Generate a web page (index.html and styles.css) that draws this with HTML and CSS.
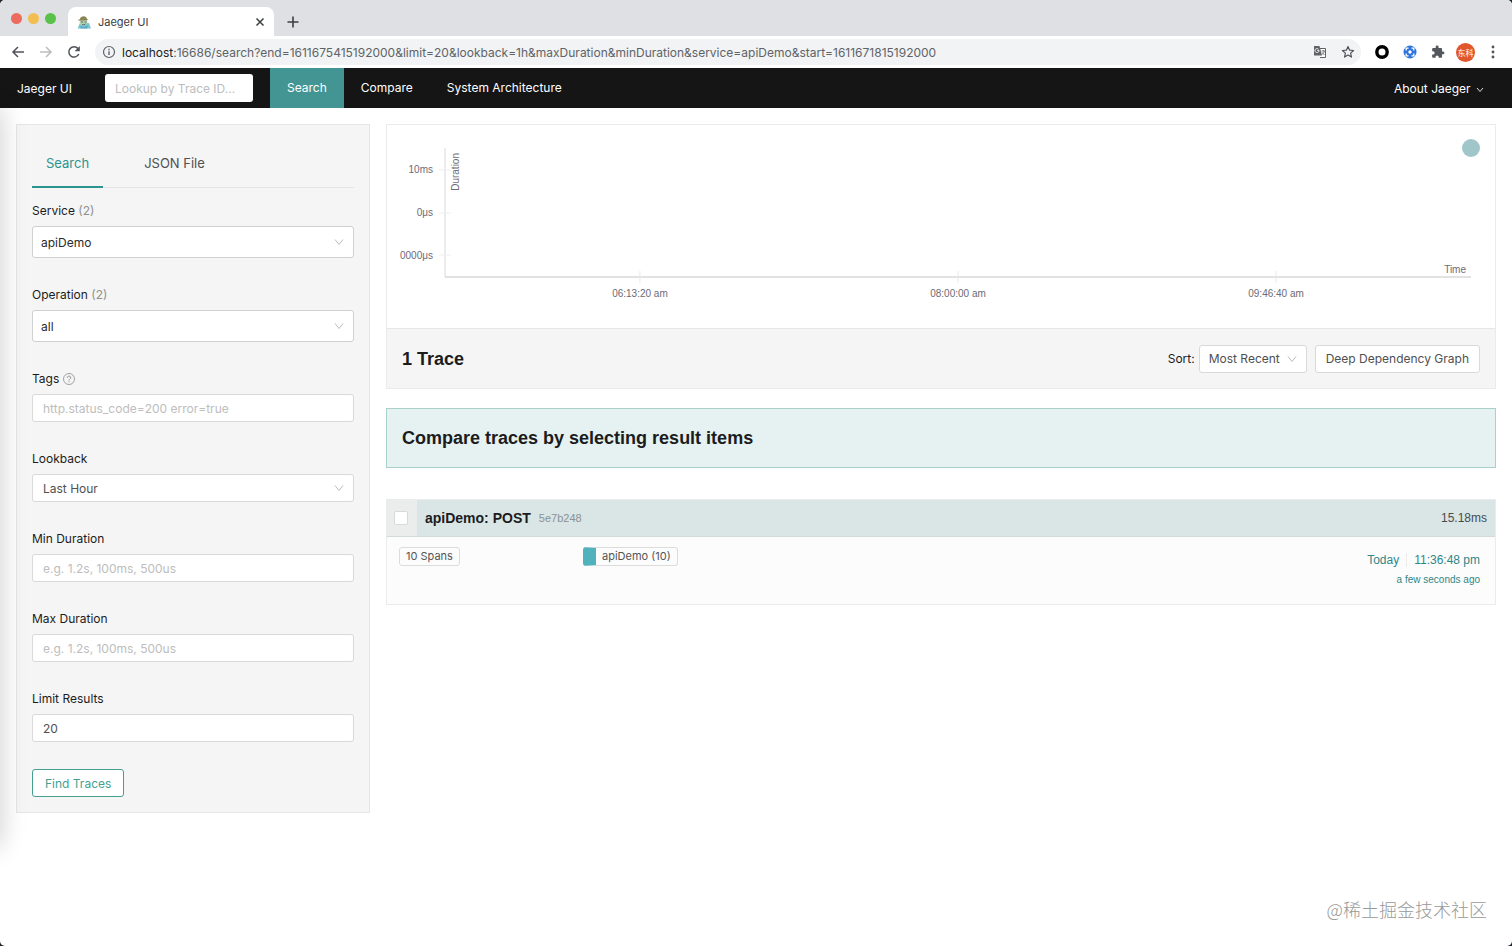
FILE: index.html
```
<!DOCTYPE html>
<html lang="en">
<head>
    <meta charset="UTF-8">
    <meta name="viewport" content="width=device-width, initial-scale=1.0">
    <title>Jaeger UI</title>
    <link rel="stylesheet" href="styles.css">
</head>
<body>
    <div class="window">
        <!-- Browser chrome -->
        <div class="tab-strip">
            <div class="lights">
                <span class="light red"></span>
                <span class="light yellow"></span>
                <span class="light green"></span>
            </div>
            <div class="browser-tab">
                <svg class="favicon" width="14" height="14" viewBox="0 0 14 14">
                    <path d="M3 8h9l2 5.500H0.500z" fill="#7cc4d4"/>
                    <circle cx="6.500" cy="7" r="3.800" fill="#b8cfae"/>
                    <path d="M0.500 5.500L3 4C3.500 0.500 9.500 0 10 4l1.500 1-4 0.600z" fill="#8a8455"/>
                    <path d="M4 7h2M7.500 7h2M5 9.500q2 1 3.500-0.500" stroke="#4f7267" fill="none"/>
                    <path d="M3.500 10.500l3 1.500 4-2v3.500h-7z" fill="#5aaec4"/>
                </svg>
                <span class="tab-title">Jaeger UI</span>
                <button type="button" class="icon-btn" aria-label="Close tab">
                    <svg width="10" height="10" viewBox="0 0 10 10"><path d="M1.500 1.500l7 7M8.500 1.500l-7 7" stroke="#3c4043" stroke-width="1.500"/></svg>
                </button>
            </div>
            <button type="button" class="icon-btn new-tab" aria-label="New tab">
                <svg width="12" height="12" viewBox="0 0 12 12"><path d="M6 0.500v11M0.500 6h11" stroke="#3c4043" stroke-width="1.600"/></svg>
            </button>
        </div>
        <div class="toolbar">
            <button type="button" class="icon-btn" aria-label="Back">
                <svg width="14" height="14" viewBox="0 0 14 14"><path d="M13 7H2M7 2L2 7l5 5" fill="none" stroke="#50545a" stroke-width="1.500"/></svg>
            </button>
            <button type="button" class="icon-btn" aria-label="Forward">
                <svg width="14" height="14" viewBox="0 0 14 14"><path d="M1 7h11M7 2l5 5-5 5" fill="none" stroke="#bbbdc0" stroke-width="1.500"/></svg>
            </button>
            <button type="button" class="icon-btn" aria-label="Reload">
                <svg width="14" height="14" viewBox="0 0 14 14"><path d="M11.800 9A5.200 5.200 0 1 1 11 3.500" fill="none" stroke="#50545a" stroke-width="1.500"/><path d="M12.800 1v5.200H7.600z" fill="#50545a"/></svg>
            </button>
            <div class="address">
                <svg width="14" height="14" viewBox="0 0 14 14"><circle cx="7" cy="7" r="5.500" fill="none" stroke="#5f6368" stroke-width="1.200"/><path d="M7 6.300V10M7 3.800v1.400" stroke="#5f6368" stroke-width="1.400"/></svg>
                <div class="url"><span class="host">localhost</span>:16686/search?end=1611675415192000&amp;limit=20&amp;lookback=1h&amp;maxDuration&amp;minDuration&amp;service=apiDemo&amp;start=1611671815192000</div>
                <button type="button" class="icon-btn" aria-label="Translate">
                    <svg width="14" height="14" viewBox="0 0 14 14">
                        <path d="M5.500 3.500h7v9h-5.500" fill="#fff" stroke="#5f6368"/>
                        <path d="M1 1h5.500l2.500 9.500H1z" fill="#5f6368"/>
                        <path d="M6 5.300H4.200M6 5.300A2 2 0 1 1 5.300 4" fill="none" stroke="#fff" stroke-width="0.900"/>
                        <path d="M8.500 6h3.500M10.300 5v1M11.400 6.200q-0.500 2-2.400 3.300M9.200 7.500l2.300 2.500" fill="none" stroke="#5f6368" stroke-width="0.800"/>
                    </svg>
                </button>
                <button type="button" class="icon-btn" aria-label="Bookmark">
                    <svg width="14" height="14" viewBox="0 0 14 14"><path d="M7 1.500l1.600 3.700 4 0.300-3 2.600 0.900 4L7 10l-3.500 2.100 0.900-4-3-2.600 4-0.300z" fill="none" stroke="#50545a" stroke-width="1.200" stroke-linejoin="round"/></svg>
                </button>
            </div>
            <div class="extensions">
                <button type="button" class="icon-btn" aria-label="Recorder">
                    <svg width="14" height="14" viewBox="0 0 14 14"><circle cx="7" cy="7" r="5.200" fill="#fff" stroke="#000" stroke-width="3.400"/></svg>
                </button>
                <button type="button" class="icon-btn" aria-label="Proxy">
                    <svg width="14" height="14" viewBox="0 0 14 14">
                        <circle cx="7" cy="7" r="6.500" fill="#2f74dc"/>
                        <path d="M3.200 5.500V3.200h2.300M8.500 3.200h2.300v2.300M10.800 8.500v2.300H8.500M5.500 10.800H3.200V8.500" fill="none" stroke="#fff" stroke-width="1.300"/>
                        <circle cx="7" cy="7" r="1.700" fill="#fff"/>
                    </svg>
                </button>
                <button type="button" class="icon-btn" aria-label="Extensions">
                    <svg width="14" height="14" viewBox="0 0 24 24"><path d="M20.500 11H19V7c0-1.100-.9-2-2-2h-4V3.500a2.500 2.500 0 0 0-5 0V5H4c-1.100 0-2 .9-2 2v3.800h1.500a2.700 2.700 0 0 1 0 5.400H2V20c0 1.100.9 2 2 2h3.800v-1.500a2.700 2.700 0 0 1 5.400 0V22H17c1.100 0 2-.9 2-2v-4h1.500a2.500 2.500 0 0 0 0-5z" fill="#54585d"/></svg>
                </button>
                <button type="button" class="avatar">东科</button>
                <button type="button" class="icon-btn" aria-label="Menu">
                    <svg width="14" height="14" viewBox="0 0 14 14" fill="#50545a"><circle cx="7" cy="2" r="1.400"/><circle cx="7" cy="7" r="1.400"/><circle cx="7" cy="12" r="1.400"/></svg>
                </button>
            </div>
        </div>

        <!-- Jaeger navigation -->
        <nav class="nav">
            <a class="brand" href="#">Jaeger UI</a>
            <input class="trace-lookup" type="text" placeholder="Lookup by Trace ID..." aria-label="Lookup by Trace ID">
            <a class="nav-link active" href="#">Search</a>
            <a class="nav-link" href="#">Compare</a>
            <a class="nav-link" href="#">System Architecture</a>
            <a class="about" href="#">About Jaeger
                <svg width="8" height="6" viewBox="0 0 8 6"><path d="M1 1l3 3.500L7 1" fill="none" stroke="#ddd"/></svg>
            </a>
        </nav>

        <div class="content">
            <div class="sidebar">
                <div class="tabs">
                    <button type="button" class="tab active">Search</button>
                    <button type="button" class="tab">JSON File</button>
                </div>
                <form class="search-form">
                    <div class="form-group">
                        <label for="service">Service <span class="count">(2)</span></label>
                        <select id="service" class="control large">
                            <option>apiDemo</option>
                        </select>
                    </div>
                    <div class="form-group">
                        <label for="operation">Operation <span class="count">(2)</span></label>
                        <select id="operation" class="control large">
                            <option>all</option>
                        </select>
                    </div>
                    <div class="form-group">
                        <label for="tags">Tags
                            <svg class="help" width="12" height="12" viewBox="0 0 12 12"><circle cx="6" cy="6" r="5.500" fill="none" stroke="#999" stroke-width="0.900"/><path d="M4.300 4.800a1.700 1.600 0 1 1 2.500 1.300Q6 6.500 6 7.400M6 8.300v1" fill="none" stroke="#888" stroke-width="0.900"/></svg>
                        </label>
                        <input id="tags" class="control" type="text" placeholder="http.status_code=200 error=true">
                    </div>
                    <div class="form-group">
                        <label for="lookback">Lookback</label>
                        <select id="lookback" class="control">
                            <option>Last Hour</option>
                        </select>
                    </div>
                    <div class="form-group">
                        <label for="minDuration">Min Duration</label>
                        <input id="minDuration" class="control" type="text" placeholder="e.g. 1.2s, 100ms, 500us">
                    </div>
                    <div class="form-group">
                        <label for="maxDuration">Max Duration</label>
                        <input id="maxDuration" class="control" type="text" placeholder="e.g. 1.2s, 100ms, 500us">
                    </div>
                    <div class="form-group">
                        <label for="limit">Limit Results</label>
                        <input id="limit" class="control" type="text" value="20">
                    </div>
                    <button type="button" class="btn find">Find Traces</button>
                </form>
            </div>

            <div class="results">
                <div class="overview">
                    <div class="chart">
                        <svg class="plot" width="100%" height="129">
                            <path d="M0 0v129" stroke="#ececec" stroke-width="2"/>
                            <line x1="0" y1="129" x2="100%" y2="129" stroke="#e2e2e2" stroke-width="2"/>
                            <path d="M-6 22h12M-6 65h12M-6 107h12" stroke="#eee"/>
                            <g stroke="#e9e9e9">
                                <line x1="19%" y1="123" x2="19%" y2="135"/>
                                <line x1="50%" y1="123" x2="50%" y2="135"/>
                                <line x1="81%" y1="123" x2="81%" y2="135"/>
                            </g>
                            <g text-anchor="end">
                                <text x="-12" y="25">10ms</text>
                                <text x="-12" y="68">0μs</text>
                                <text x="-12" y="111">0000μs</text>
                                <text x="-5" y="14" transform="rotate(-90)">Duration</text>
                            </g>
                            <g text-anchor="middle">
                                <text x="19%" y="149">06:13:20 am</text>
                                <text x="50%" y="149">08:00:00 am</text>
                                <text x="81%" y="149">09:46:40 am</text>
                            </g>
                            <svg x="100%" overflow="visible">
                                <text x="-5" y="125" text-anchor="end">Time</text>
                            </svg>
                            <circle cx="100%" cy="0" r="9" fill="#a0c6ca"/>
                        </svg>
                    </div>
                    <div class="summary">
                        <h2>1 Trace</h2>
                        <label class="sort-label" for="sort">Sort:</label>
                        <select id="sort" class="control sort">
                            <option>Most Recent</option>
                        </select>
                        <button type="button" class="btn graph">Deep Dependency Graph</button>
                    </div>
                </div>

                <div class="compare">
                    <h2>Compare traces by selecting result items</h2>
                </div>

                <div class="trace">
                    <div class="trace-header">
                        <div class="trace-check">
                            <input type="checkbox" aria-label="Select apiDemo: POST">
                        </div>
                        <h3>apiDemo: POST</h3>
                        <span class="trace-id">5e7b248</span>
                        <span class="trace-duration">15.18ms</span>
                    </div>
                    <div class="trace-body">
                        <div class="spans"><span class="tag">10 Spans</span></div>
                        <div class="services"><span class="tag service">apiDemo (10)</span></div>
                        <div class="when">
                            <div class="when-date"><span>Today</span><span class="clock">11:36:48 pm</span></div>
                            <small>a few seconds ago</small>
                        </div>
                    </div>
                </div>
            </div>
        </div>
        <div class="watermark">@稀土掘金技术社区</div>
    </div>
</body>
</html>
```

FILE: styles.css
```
* {
    box-sizing: border-box;
}

body {
    margin: 0;
    background-color: #1d2528;
    font-family: Inter, "Noto Sans CJK SC", sans-serif;
    font-size: 12px;
    color: #1c1c1c;
}

button,
input,
select {
    font-family: inherit;
    font-size: 12px;
}

a {
    color: inherit;
    text-decoration: none;
}

h2,
h3 {
    margin: 0;
    font-family: "Liberation Sans", Arial, sans-serif;
    font-weight: bold;
    color: #1c1c1c;
}

h2 {
    font-size: 18px;
    line-height: 20px;
}

h3 {
    font-size: 14px;
}

.window {
    position: relative;
    min-height: 100vh;
    background-color: #fff;
    border-radius: 5px;
    overflow: hidden;
}

/* Soft shadow cast along the left edge */
.window::before {
    content: "";
    position: absolute;
    top: 108px;
    bottom: 100px;
    left: -20px;
    width: 20px;
    box-shadow: 0 0 26px rgba(0, 0, 0, 0.22);
    pointer-events: none;
    z-index: 2;
}

/* Browser */
.tab-strip {
    display: flex;
    height: 36px;
    background-color: #dee0e4;
}

.lights {
    display: flex;
    gap: 6px;
    padding: 13px 12px 0 11px;
}

.light {
    width: 11px;
    height: 11px;
    border-radius: 50%;
}

.red {
    background-color: #ed6a5e;
}

.yellow {
    background-color: #f4bd4f;
}

.green {
    background-color: #5ac24b;
}

.browser-tab {
    display: flex;
    align-items: center;
    gap: 7px;
    width: 206px;
    margin-top: 7px;
    padding: 0 9px;
    background-color: #fff;
    border-radius: 8px 8px 0 0;
}

.tab-title {
    flex: 1;
    font-size: 11px;
    color: #3c4043;
}

.icon-btn {
    display: flex;
    align-items: center;
    justify-content: center;
    padding: 0;
    border: 0;
    background: none;
}

.new-tab {
    width: 38px;
    margin-top: 7px;
}

.toolbar {
    display: flex;
    align-items: center;
    gap: 14px;
    height: 32px;
    padding: 0 12px 0 11px;
}

.address {
    flex: 1;
    display: flex;
    align-items: center;
    gap: 14px;
    height: 26px;
    padding: 0 6px 0 7px;
    background-color: #f1f3f4;
    border-radius: 13px;
}

.url {
    flex: 1;
    margin-left: -8px;
    color: #5f6368;
    white-space: nowrap;
    overflow: hidden;
}

.host {
    color: #202124;
}

.extensions {
    display: flex;
    align-items: center;
    gap: 14px;
}

.avatar {
    width: 19px;
    height: 19px;
    margin: 0 -3px;
    padding: 0;
    border: 0;
    border-radius: 50%;
    background-color: #e2562b;
    color: #fff;
    font-size: 8px;
}

/* Navigation */
.nav {
    display: flex;
    align-items: center;
    height: 40px;
    background-color: #151515;
    color: #fff;
}

.brand {
    width: 105px;
    padding-left: 17px;
}

.trace-lookup {
    width: 148px;
    height: 28px;
    margin-right: 17px;
    padding: 0 10px;
    border: 0;
    border-radius: 3px;
}

.nav-link {
    padding: 0 17px;
    line-height: 40px;
}

.nav-link.active {
    background-color: #439594;
}

.about {
    margin-left: auto;
    padding-right: 28px;
}

.about svg {
    margin-left: 2px;
}

/* Search panel */
.content {
    display: flex;
    align-items: flex-start;
    gap: 16px;
    padding: 16px;
}

.sidebar {
    width: 354px;
    padding: 15px;
    background-color: #f5f5f5;
    border: 1px solid #e6e6e6;
}

.tabs {
    display: flex;
    gap: 27px;
    border-bottom: 1px solid #e4e4e4;
}

.tab {
    height: 48px;
    margin-bottom: -1px;
    padding: 0 14px;
    border: 0;
    border-bottom: 2px solid transparent;
    background: none;
    font-size: 13px;
    color: #505050;
}

.tab.active {
    color: #2b9490;
    border-bottom-color: #2b9490;
}

.search-form {
    padding-top: 13px;
}

.form-group {
    display: flex;
    flex-direction: column;
    gap: 5px;
    margin-bottom: 27px;
}

.form-group label {
    line-height: 20px;
}

.count {
    color: #909090;
}

.help {
    vertical-align: -2px;
}

.control {
    width: 100%;
    height: 28px;
    padding: 0 10px;
    border: 1px solid #d9d9d9;
    border-radius: 3px;
    background-color: #fff;
    color: #505050;
}

::placeholder {
    color: #bdbdbd;
}

select.control {
    appearance: none;
    background-image: url("data:image/svg+xml,%3Csvg xmlns='http://www.w3.org/2000/svg' width='10' height='8' viewBox='0 0 10 8'%3E%3Cpath d='M1 1.500l4 5 4-5' fill='none' stroke='%23bbb'/%3E%3C/svg%3E");
    background-repeat: no-repeat;
    background-position: right 9px center;
}

.control.large {
    height: 32px;
    padding: 0 8px;
    border-color: #d0d0d0;
    color: #2a2a2a;
}

.btn {
    height: 28px;
    padding: 0 12px;
    border: 1px solid #d9d9d9;
    border-radius: 3px;
    background-color: #fff;
    color: #505050;
}

.btn.find {
    border-color: #45a091;
    color: #45a091;
}

.btn.graph {
    padding: 0 10px;
}

/* Results */
.results {
    flex: 1;
    min-width: 0;
}

.overview {
    border: 1px solid #ebebeb;
}

.chart {
    height: 203px;
    padding: 23px 24px 0 58px;
}

.plot {
    display: block;
    overflow: visible;
}

.plot text {
    font-family: "Liberation Sans", Arial, sans-serif;
    font-size: 10px;
    fill: #6b6b76;
}

.summary {
    display: flex;
    align-items: center;
    gap: 8px;
    height: 60px;
    padding: 0 15px;
    background-color: #f5f5f5;
    border-top: 1px solid #e6e6e6;
}

.summary h2 {
    flex: 1;
}

.sort-label {
    margin-right: -4px;
}

.control.sort {
    width: 108px;
    padding: 0 9px;
}

.compare {
    margin-top: 19px;
    padding: 19px 15px;
    border: 1px solid #a9d0cb;
    background-color: #e6f2f2;
}

.trace {
    margin-top: 31px;
    border: 1px solid #ebebeb;
    background-color: #fcfcfc;
}

.trace-header {
    display: flex;
    align-items: center;
    gap: 8px;
    height: 37px;
    padding-right: 8px;
    background-color: #dae5e6;
    border-bottom: 1px solid #d2dadb;
}

.trace-check {
    display: flex;
    align-items: center;
    align-self: stretch;
    width: 30px;
    padding-left: 7px;
    background-color: #ebecec;
}

.trace-check input {
    appearance: none;
    width: 14px;
    height: 14px;
    margin: 0;
    border: 1px solid #d9d9d9;
    border-radius: 2px;
    background-color: #fff;
}

.trace-id {
    font-family: "Liberation Sans", Arial, sans-serif;
    font-size: 11px;
    color: #8a9293;
}

.trace-duration {
    margin-left: auto;
    font-family: "Liberation Sans", Arial, sans-serif;
    color: #454d4e;
}

.trace-body {
    display: flex;
    min-height: 67px;
    padding: 10px 15px 10px 12px;
}

.spans {
    width: 184px;
}

.services {
    flex: 1;
}

.tag {
    display: inline-block;
    padding: 0 6px;
    border: 1px solid #dcdcdc;
    border-radius: 3px;
    font-size: 11px;
    line-height: 17px;
    color: #555;
}

.tag.service {
    border-left: 13px solid #50b2bd;
}

.when {
    padding-top: 6px;
    text-align: right;
    font-family: "Liberation Sans", Arial, sans-serif;
    color: #2f8787;
}

.clock {
    margin-left: 7px;
    padding-left: 7px;
    border-left: 1px solid #ebebeb;
}

.when small {
    display: block;
    margin-top: 7px;
    font-size: 10px;
}

.watermark {
    position: absolute;
    right: 25px;
    bottom: 24px;
    font-family: "Noto Sans CJK SC", sans-serif;
    font-size: 18px;
    font-weight: 300;
    color: #999;
}
```
